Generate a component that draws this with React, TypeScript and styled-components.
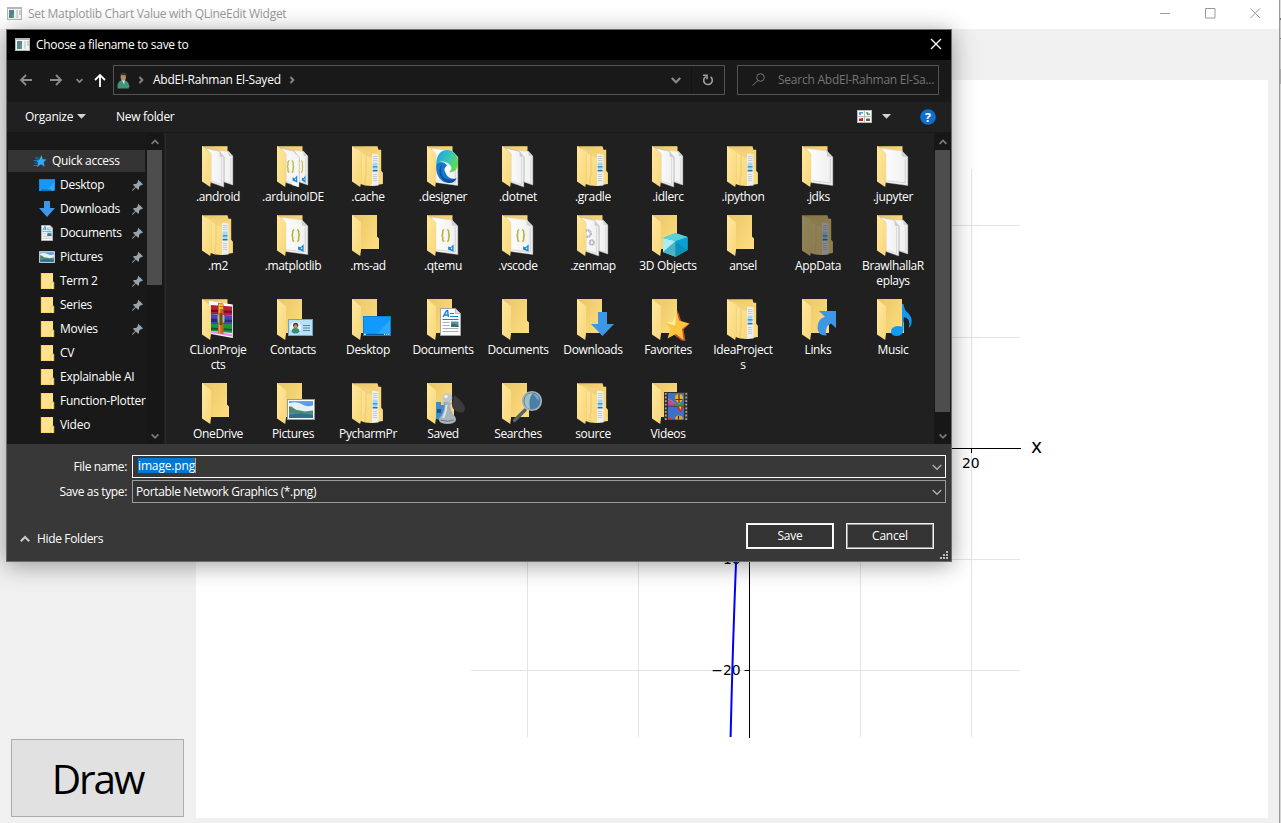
import React from "react";
import styled, { createGlobalStyle } from "styled-components";

const Global = createGlobalStyle`
  * { box-sizing: border-box; }
  body { margin: 0; overflow: hidden; font-family: "Open Sans", "Noto Sans", sans-serif; font-size: 12px; }
  svg { display: block; flex: none; }
`;

/* ---------- main window ---------- */
const Screen = styled.div`
  position: relative; width: 1281px; height: 823px; display: flex; background: #f0f0f0; overflow: hidden;
`;
const MainWindow = styled.div`flex: 1; display: flex; flex-direction: column;`;
const EdgeStrip = styled.div`
  width: 2px; border-left: 1px solid #9a9a9a;
  background: linear-gradient(#ddd 0 18px, #777 18px 20px, #ccc 20px 38px, #777 38px 39px, #c8c8c8 39px 69px, #aaa 69px 84px, #d4d4d4 84px);
`;
const MainTitle = styled.div`
  height: 29px; display: flex; align-items: center; background: #fff; color: #999; padding: 0 18px 3px 7px; gap: 6px;
`;
const MainName = styled.span`flex: 1; letter-spacing: -0.285px; white-space: nowrap;`;
const WindowButtons = styled.div`display: flex; gap: 34px; align-items: center;`;
const MainBody = styled.div`flex: 1; display: flex; padding: 51px 11px 5px 11px; gap: 12px;`;
const LeftColumn = styled.div`width: 173px; display: flex; flex-direction: column; justify-content: flex-end; padding-bottom: 1px;`;
const DrawButton = styled.button`
  height: 78px; padding: 0; border: 1px solid #adadad; background: #e1e1e1; color: #000;
  font: 40.5px "Open Sans", sans-serif; letter-spacing: -2.1px; line-height: 77px;
`;
const Canvas = styled.div`width: 1072px; background: #fff;`;

/* ---------- dialog ---------- */
const Dialog = styled.div`
  position: absolute; left: 6px; top: 29px; width: 946px; height: 533px; display: flex; flex-direction: column;
  border: 1px solid #6b6b6b; background: #383838; color: #fff;
  box-shadow: 0 3px 22px rgba(0, 0, 0, 0.38);
`;
const DialogTitle = styled.div`
  height: 30px; background: #000; display: flex; align-items: center; padding: 0 9px 1px 8px; gap: 6px;
`;
const Txt = styled.span<{ $ls?: number; $grow?: boolean }>`
  white-space: nowrap; letter-spacing: ${(p) => p.$ls ?? -0.3}px; ${(p) => p.$grow && "flex: 1;"}
`;
const NavBar = styled.div`
  height: 42px; background: #191919; display: flex; align-items: center; padding: 0 12px 2px 12px;
`;
const Arrows = styled.div`width: 94px; display: flex; align-items: center;`;
const AddressBox = styled.div`
  width: 612px; height: 30px; border: 1px solid #535353; display: flex; align-items: center; padding-left: 3px;
  font-weight: 500;
`;
const AddressText = styled.span`
  flex: 1; margin-left: 8px; padding-bottom: 1px; display: flex; align-items: center; gap: 7px; letter-spacing: -0.22px; white-space: nowrap;
`;
const RefreshCell = styled.div`
  width: 33px; height: 28px; margin-left: 10px; border-left: 1px solid #131313; display: grid; place-items: center;
`;
const SearchBox = styled.div`
  width: 202px; height: 30px; margin-left: 12px; border: 1px solid #535353; color: #757575;
  display: flex; align-items: center; gap: 13px; padding: 0 0 1px 14px;
`;
const ToolBar = styled.div`
  height: 31px; background: #202020; border-bottom: 1px solid #191919; display: flex; align-items: center;
  padding: 0 15px 1px 18px;
`;
const OrganizeItem = styled.div`width: 91px; display: flex; align-items: center; gap: 4px;`;
const Panes = styled.div`height: 311px; display: flex;`;
const SidePane = styled.div`width: 139px; background: #191919; overflow: hidden; padding: 17px 0 0 1px;`;
const QuickRow = styled.div`
  width: 137px; height: 22px; background: #333; display: flex; align-items: center; padding: 0 0 1px 24px; gap: 4px; margin-bottom: 1px;
`;
const SideRow = styled.div`height: 24px; display: flex; align-items: center; padding-left: 31px;`;
const SideLabel = styled.span`
  flex: 1; margin-left: 5px; white-space: nowrap; letter-spacing: -0.28px; padding-bottom: 1px;
`;
const PinSlot = styled.span`width: 14px; flex: none;`;
const ScrollBar = styled.div`
  width: 17px; background: #171717; display: flex; flex-direction: column; align-items: center; padding: 5px 1px 4px;
`;
const Thumb = styled.div<{ $h: number }>`width: 15px; height: ${(p) => p.$h}px; background: #4d4d4d; margin: 4px 0 auto;`;
const Splitter = styled.div`width: 3px; background: #202020; border-left: 1px solid #191919; border-right: 1px solid #2b2b2b;`;
const FilePane = styled.div`
  flex: 1; background: #202020; overflow: hidden; padding: 10px 0 0 14.5px;
`;
const FileGrid = styled.div`display: grid; grid-template-columns: repeat(10, 75px); row-gap: 7px;`;
const FileCell = styled.div<{ $dim?: boolean }>`
  display: flex; flex-direction: column; align-items: center;
  svg { opacity: ${(p) => (p.$dim ? 0.5 : 1)}; overflow: visible; }
`;
const FileLabel = styled.span`
  margin-top: -2px; padding-bottom: 1px; text-align: center; line-height: 15px; white-space: pre; letter-spacing: -0.36px;
`;
const Footer = styled.div`flex: 1; background: #383838; display: flex; flex-direction: column; padding: 11px 5px 0 0;`;
const FieldRow = styled.div`display: flex; align-items: center; margin-bottom: 2px;`;
const FieldLabel = styled.span`width: 120px; text-align: right; margin-right: 5px; letter-spacing: -0.36px;`;
const Field = styled.div<{ $focus?: boolean }>`
  flex: 1; height: 23px; display: flex; align-items: center; justify-content: space-between;
  background: ${(p) => (p.$focus ? "#383838" : "#333")};
  border: 1px solid ${(p) => (p.$focus ? "#fff" : "#9b9b9b")};
  padding: 0 3px 0 ${(p) => (p.$focus ? 5 : 3)}px;
`;
const Selected = styled.span`
  background: #0078d7; height: 15px; line-height: 15px; letter-spacing: -0.14px; border-right: 1px solid #ff8a28; margin-bottom: 2px;
`;
const ActionRow = styled.div`display: flex; align-items: center; padding: 15px 12px 0 13px; margin-top: 3px;`;
const HideFolders = styled.div`flex: 1; display: flex; align-items: center; gap: 7px; padding-top: 5px;`;
const ActionButton = styled.button<{ $primary?: boolean }>`
  width: 88px; height: 26px; margin-left: 12px; padding: 0 0 1px; background: #333; color: #fff; font: inherit; letter-spacing: -0.2px;
  border: 1px solid #f2f2f2; box-shadow: inset 0 0 0 1px ${(p) => (p.$primary ? "#fff" : "#9b9b9b")};
`;
const Grip = styled.div`display: flex; justify-content: flex-end; margin: 2px -2px 0 0;`;

/* ---------- small glyphs ---------- */
const AppIcon = () => (
  <svg width="15" height="13" viewBox="0 0 15 13">
    <rect width="15" height="13" fill="#b7b7b7" /><rect x="1" y="2" width="13" height="10" fill="#f4f4f4" />
    <rect x="2" y="3" width="5" height="8" fill="#4e8a86" /><path d="M2 3h2v6h-2z" fill="#5b7ea9" /><rect x="5" y="7" width="2" height="4" fill="#58a06a" />
    <rect x="9" y="3" width="2" height="8" fill="#d9d9d9" /><rect x="12" y="3" width="2" height="5" fill="#bcd3e2" />
  </svg>
);
const Chev = ({ dir = "down", color = "#8a8a8a", w = 8, sw = 1.8 }: { dir?: string; color?: string; w?: number; sw?: number }) => (
  <svg width={w} height={w} viewBox="0 0 8 8" fill="none" stroke={color} strokeWidth={sw}>
    <path d={dir === "down" ? "M.6 2.4 4 5.8 7.4 2.4" : dir === "up" ? "M.6 5.8 4 2.4 7.4 5.8" : "M2.4 1 5.4 4 2.4 7"} />
  </svg>
);
const NavArrow = ({ d, color }: { d: string; color: string }) => (
  <svg width="14" height="14" viewBox="0 0 14 14" fill="none" stroke={color} strokeWidth="1.8"><path d={d} /></svg>
);
const Gap = styled.span<{ $w: number }>`width: ${(p) => p.$w}px; flex: none;`;
const Caret = () => <svg width="9" height="5"><path d="M0 0h9L4.5 4.7z" fill="#d4d4d4" /></svg>;
const Pin = () => (
  <svg width="11" height="11" viewBox="0 0 11 11" fill="#98a4ad">
    <path d="M6.5 0 11 4.2 9.8 5.2 9 4.9 7 7 7.1 8.9 6 9.8 3.8 7.6 1 10.4 0 10.9 .4 9.8 3.1 6.9 1 4.8 2 3.9 4.1 4 6 2 5.6 1z" />
  </svg>
);
const UserIcon = () => (
  <svg width="13" height="17" viewBox="0 0 13 17">
    <path d="M.5 16.500V12.500q1-3.500 4-4.500l3.500.2q3.800 1.600 4.500 6.300l-1 2z" fill="#3f9576" /><path d="M4.500 7.500l3.500 0-.8 5z" fill="#e8e3d8" />
    <ellipse cx="6.300" cy="4.900" rx="2.700" ry="3.600" fill="#b98c68" /><path d="M2.800 5Q2.400 1 6 .5q4-.3 3.600 3.400L9 5 8.500 3.200 4.600 3z" fill="#38332f" />
  </svg>
);

const PictureArt = ({ x, y, w, h }: { x: number; y: number; w: number; h: number }) => (
  <svg x={x} y={y} width={w} height={h} viewBox="0 0 28 20" preserveAspectRatio="none">
    <rect width="28" height="20" fill="#9a9a9a" /><rect x="1" y="1" width="26" height="18" fill="#fff" />
    <rect x="2" y="2" width="24" height="16" fill="#5b9ddd" /><path d="M2 4q8-2 13 1t11 1v7H2z" fill="#e3f1fa" />
    <path d="M2 7q3 0 5 2t6 2l5 1 8-1v3H2z" fill="#4f8568" /><path d="M2 13h24v5H2z" fill="#4b93a4" /><path d="M2 15q12-3 24 0v3H2z" fill="#2f6f8c" />
  </svg>
);
const MonitorArt = ({ x, y, w, h }: { x: number; y: number; w: number; h: number }) => (
  <svg x={x} y={y} width={w} height={h} viewBox="0 0 28 20" preserveAspectRatio="none">
    <rect width="28" height="20" fill="#0a7fd6" /><rect x="1" y="1" width="26" height="17" fill="#1199fb" />
    <path d="M14 18 27 4v14z" fill="#2ba8ff" /><path d="M1 18.4h26" stroke="#06599b" /><path d="M1 18.3h2M21 18.3h1.2M23.2 18.3h1.2M25.2 18.3h1.2" stroke="#fff" />
  </svg>
);
const PageArt = ({ x, y, w, h }: { x: number; y: number; w: number; h: number }) => (
  <svg x={x} y={y} width={w} height={h} viewBox="0 0 21 28" preserveAspectRatio="none">
    <path d="M.5.5h15l5 5v22H.5z" fill="#fbfbfb" stroke="#a5a5a5" /><path d="M15.5.5v5h5z" fill="#ddd" stroke="#999" strokeWidth=".6" />
    <path d="M3 9 6.6 2.6h1L8.4 9M4.600 7h3.6" stroke="#1583cc" strokeWidth="1.4" fill="none" />
    <path d="M10 5.5h4M10 8.5h8M2.5 11.5h16" stroke="#1583cc" strokeWidth="1.1" />
    <path d="M2.5 14.5h7M2.5 17.5h7M2.5 20.5h16M2.5 23.5h16" stroke="#a8b0b6" strokeWidth="1" />
    <rect x="11" y="13.5" width="7.5" height="5.5" fill="#4f93c6" /><path d="M11 19v-2.5l3-1 4.5 2V19z" fill="#3b6e5d" />
  </svg>
);

const SideIcon = ({ kind }: { kind: string }) => (
  <svg width="16" height="16" viewBox="0 0 16 16">
    {kind === "desktop" && <MonitorArt x={0} y={2} w={16} h={12} />}
    {kind === "download" && <path d="M5 0h6v7h5l-8 9L0 7h5z" fill="#3c98e8" />}
    {kind === "doc" && <PageArt x={2} y={0} w={12} h={16} />}
    {kind === "picture" && <PictureArt x={0} y={2} w={16} h={12} />}
    {kind === "folder" && (
      <><path d="M2 0h12v16H2z" fill="#ffe28b" /><path d="M2 .4h12M2.3 0v16M2 15.6h12" stroke="#f3cf63" strokeWidth=".8" />
        <path d="M12 16V10h1V9h1.8v7z" fill="#fff0b8" stroke="#eec54e" strokeWidth=".8" /></>
    )}
    {kind === "star" && (
      <><path d="M9.500 2 10.800 6.300 14.500 6.600 11.600 9.200 12.800 13.800 9 11.300 5 14 6.200 9.500 3.500 7l4-.5z" fill="#35a9f7" />
        <path d="M3 5h4.500M1.500 7.500h5M2.500 10h4M1.500 12.500h4.500" stroke="#1c81c8" strokeWidth=".9" /></>
    )}
  </svg>
);

/* ---------- large folder icons ---------- */
const HiddenDefs = styled.svg`position: absolute;`;
const Defs = () => (
  <HiddenDefs width="0" height="0">
    <defs>
      <linearGradient id="flap" x1="0" x2="1" y2="1"><stop stopColor="#ffe8a0" /><stop offset="1" stopColor="#f9d779" /></linearGradient>
      <linearGradient id="back" x1="0" x2="1" y2=".6"><stop stopColor="#e9c566" /><stop offset="1" stopColor="#fbdb7d" /></linearGradient>
      <linearGradient id="sheet" x1="0" x2="1"><stop stopColor="#fff" /><stop offset="1" stopColor="#efefef" /></linearGradient>
      <linearGradient id="edgeTop" x1="0" x2="1" y2=".5"><stop stopColor="#1e9bd8" /><stop offset=".6" stopColor="#36c6c0" /><stop offset="1" stopColor="#62d84f" /></linearGradient>
    </defs>
  </HiddenDefs>
);
const Flap = () => <path d="M8 3 17 10.3V38L16.2 44 8 38.6z" fill="url(#flap)" />;
const SheetBack = () => (
  <>
    <path d="M19 7.5 34.5 8.3 38.8 13V42L30 39z" fill="url(#sheet)" stroke="#cfcfcf" strokeWidth=".4" />
    <path d="M34.3 8.4l.4 4.4 4 1z" fill="#cfcfcf" /><path d="M30.5 14v24.5l6.3 2V15" fill="none" stroke="#c5c5c5" strokeWidth=".5" />
  </>
);
const SheetFront = () => (
  <>
    <path d="M11 5 25.5 8.3 29.8 13.8V44L17 39.5V10.5z" fill="url(#sheet)" stroke="#a8a8a8" strokeWidth=".5" />
    <path d="M25.3 8.4l.5 5 4 1.2z" fill="#c9c9c9" /><path d="M17.5 38 27.5 41.5V15" fill="none" stroke="#c5c5c5" strokeWidth=".5" />
  </>
);
const SheetWide = () => (
  <>
    <path d="M12 5.3 33 8 38.8 14V42.5L17 39.5V11z" fill="url(#sheet)" stroke="#cfcfcf" strokeWidth=".4" />
    <path d="M32.5 8l.5 5.4 5.8 1.2z" fill="#cfcfcf" /><path d="M17.5 37.7 36.3 40V15.5" fill="none" stroke="#bdbdbd" strokeWidth=".6" />
  </>
);
const CodeMark = ({ x, s = 1 }: { x: number; s?: number }) => (
  <g transform={`translate(${x} 0) scale(${s} 1)`} fill="none">
    <path d="M3 17.7q-1.600 0-1.600 1.800v2.500q0 1.300-1.200 1.500 1.200.2 1.200 1.500v2.500q0 1.800 1.600 1.800M5.800 17.7q1.600 0 1.600 1.800v2.500q0 1.300 1.200 1.500-1.200.2-1.200 1.500v2.500q0 1.800-1.600 1.800" stroke="#b4b52e" strokeWidth="1.500" />
    <path d="M12.300 32.300V39.800L9.600 38.600 6.800 37.700V34.600L9.400 35.200z" fill="#1c86d6" /><path d="M9.300 36.300l1.600-1v2.200z" fill="#fff" />
  </g>
);
const Nested = () => (
  <>
    <path d="M8 3.200h25.500l1 3.500h2.700v21l1.700 2V41L26 43z" fill="url(#back)" />
    <path d="M12 5 27 8.500v34L17 38z" fill="#f2d27a" />
    <path d="M28 10.500 34.500 11.500V42.500L27.500 43z" fill="#eceff2" />
    <path d="M29 13.500h4.500M29 15.500h4.500M29 17.500h4.500M29 31.500h4M29 33.500h4M29 35.500h4M29 37.500h4" stroke="#b9c2ca" strokeWidth=".8" />
    <path d="M28.700 19.500h4.800v9H28.700z" fill="#a9d6ef" /><path d="M28.700 23.800h4.800" stroke="#3d9bd6" strokeWidth="1.500" /><path d="M28.700 27.700h4.800" stroke="#376f8c" strokeWidth="1.400" />
    <path d="M12 5.500 22 13 28 15V43L21 42.500 14 40z" fill="url(#flap)" /><path d="M22 13v20l-1 1v8" stroke="#dfb858" strokeWidth=".6" fill="none" />
    <path d="M17 10.500v28l-1 4" stroke="#e1bc5d" strokeWidth=".7" fill="none" />
  </>
);

const FolderIcon = ({ kind }: { kind: string }) => {
  const open = ["docs2", "doc1", "code2", "code1", "edge", "gears", "rar"].includes(kind);
  return (
    <svg width="48" height="48" viewBox="0 0 48 48">
      {kind === "nested" ? <Nested /> : open ? <path d="M8 3.200H33.500V38H8z" fill="url(#back)" /> : (
        <path d="M8 3H33V24.500L35 26.500V37H8z" fill="url(#back)" />
      )}
      {(kind === "docs2" || kind === "code2") && <><SheetBack /><SheetFront /></>}
      {kind === "gears" && (
        <><SheetBack /><SheetFront />
          <circle cx="18.500" cy="21.500" r="3.300" fill="none" stroke="#aebdc6" strokeWidth="2.400" strokeDasharray="1.700 .5" />
          <circle cx="22.800" cy="30.500" r="2.200" fill="none" stroke="#a3b2bc" strokeWidth="2" strokeDasharray="1.400 .4" /></>
      )}
      {(kind === "doc1" || kind === "code1" || kind === "edge") && <SheetWide />}
      {kind === "code2" && <><CodeMark x={28.500} s={0.65} /><path d="M23 8 29.800 14V44L23 42z" fill="#f6f6f6" /><CodeMark x={17.800} s={0.85} /></>}
      {kind === "code1" && <CodeMark x={22.300} />}
      {kind === "edge" && (
        <>
          <path d="M17.200 22C17 12 22 7 28 7c7 0 11 6 11 13 0 7-5 10-9 9 3-2 3-5 1-7-4-4-11-5-13.800 0z" fill="url(#edgeTop)" />
          <path d="M17.200 22C16 34 24 42 33 39.500q3-1 4.500-4Q30 37 27 31q-2-5 1.500-8.500C24 18 18.500 18 17.200 22z" fill="#1678c8" />
          <path d="M25 20.500Q20 23 22.500 31t15 4.500Q35 40 30 40C20 38 17 24 25 20.500z" fill="#114e9e" />
          <path d="M28.500 21.500q4 1.500 2.500 5-1.600 3 0 4Q25 31 25.500 25.500z" fill="#fff" />
        </>
      )}
      {kind === "rar" && (
        <>
          <path d="M15 5 38.800 8.500V42L17 38z" fill="#fff" />
          <path d="M17 9 38 10.500v9L17 18z" fill="#b91e3d" /><path d="M17 13.500 38 15v2L17 16z" fill="#6f1228" />
          <path d="M17 18 38 19.500V28L17 28z" fill="#3f49b5" /><path d="M17 22.500 38 24v2L17 26z" fill="#232a78" />
          <path d="M17 28H38v9L17 35z" fill="#1f9345" /><path d="M17 31.500 38 33v1.500L17 33.500z" fill="#0e5526" />
          <path d="M17 35 38 38v2.500L17 37z" fill="#ed8be7" />
          <path d="M24 7l5.500.5V38l-5.500-1z" fill="#c6661e" /><path d="M25.500 8v29" stroke="#e7a13d" strokeWidth="1.500" />
          <rect x="23.500" y="19" width="7" height="7.500" rx="1" fill="#b9b295" /><rect x="25.500" y="17" width="3" height="12" fill="#6c4a20" /><path d="M25 9h4M25 12h4" stroke="#f8d33a" strokeWidth="1.500" />
        </>
      )}
      <Flap />
      {kind === "cube" && (
        <><path d="M31.500 21 43.500 25v13l-12 6.700L19 40V26z" fill="#25b9d0" /><path d="M19 26l12.500 3v15.700L19 40z" fill="#a9ecf3" />
          <path d="M31.500 29l12-4v13l-12 6.700z" fill="#0c9fd6" /><path d="M31.500 29l12 9-12 6.700L19 40z" fill="#0a8ca6" opacity=".6" /><path d="M19 26l12.500-5 12 4-12 4z" fill="#57d2dd" /></>
      )}
      {kind === "contact" && (
        <><rect x="19.500" y="23.500" width="24" height="16" fill="#b9e0f5" stroke="#6aa6c6" /><circle cx="26.500" cy="31.500" r="5.700" fill="#edf6fb" />
          <path d="M22.500 36q0-4 4-4t4 4q-4 3-8 0z" fill="#3b8c6f" /><circle cx="26.700" cy="29.300" r="2.600" fill="#4e3a2e" /><circle cx="26.700" cy="30.300" r="1.700" fill="#c3926d" />
          <path d="M34 29.500h7M34 32h7M34 34.500h7" stroke="#3d7ca3" strokeWidth=".9" /></>
      )}
      {kind === "desktop" && <MonitorArt x={19} y={20} w={28} h={20} />}
      {kind === "page" && <PageArt x={21} y={12} w={21} h={28} />}
      {kind === "download" && <path d="M29 16h9v12h7L33.500 40 22 28h7z" fill="#3e97e6" />}
      {kind === "star" && (
        <><path d="M33.500 14l4 12 8.500 1.500-6.500 6 2 11.500-4-.5-8-6z" fill="#c9512a" /><path d="M32.500 14.500l2.500 10 10 3-7 5.500 1.500 11-7.700-6L23.500 42.500l3-9.500-5.500-6.500 8-1z" fill="#fbc540" />
          <path d="M32.500 14.500l-1.500 15-9.500-2.700 7.500-1.300z" fill="#fff0a0" /></>
      )}
      {kind === "link" && <path d="M25 15H42V32L37 27.500Q30 31 32.500 39.500 24 40 23.500 32T31 20.500L29 19z" fill="#3e97e6" />}
      {kind === "music" && <path d="M33 8h1.500Q35 14 40 18q5 6 1 13l-1.300.6Q42.500 22.500 34.800 21L34.500 34Q34 39.500 28 40 22 40 22 35.500q0-5 7-5.500l4 .6z" fill="#0f9bf5" />}
      {kind === "picture" && <PictureArt x={18} y={19} w={28} h={21} />}
      {kind === "games" && (
        <><path d="M17 22h5v3h3v-3h5v17q-8 2-13 0z" fill="#3d8ccc" /><path d="M18 29h4v4h-4z" fill="#1e5686" />
          <path d="M35 15q11 8 11 14-1 5-6 3-6-1-7-6z" fill="#3b3b3e" />
          <circle cx="28.500" cy="18" r="4.800" fill="#bcc6cc" /><path d="M24 22.500h9v2h-1.700q0 7 5 12.500 3 6.500-8 7Q19 43.700 20 38.500 25.500 33 25.700 24.500H24z" fill="#a7b4bc" />
          <path d="M27.500 25q-.5 8-3.500 13" stroke="#dfe5e8" strokeWidth="1.800" fill="none" />
          <path d="M21.500 40q7 2.500 13.500 0" stroke="#6b7880" fill="none" /><circle cx="27" cy="16.500" r="1.800" fill="#eef2f4" /></>
      )}
      {kind === "search" && (
        <><path d="M31 30 20.500 40.500" stroke="#5a6167" strokeWidth="3.400" strokeLinecap="round" /><circle cx="38" cy="21" r="9.300" fill="#4c7fa4" stroke="#a9b3ba" strokeWidth="1.600" />
          <path d="M31 24a8 8 0 0 1 8-11q-5 5-3 16-4-1-5-5z" fill="#b4d6cd" opacity=".8" /><path d="M39 14q6 0 6 7-3-4-6-7z" fill="#7fb1d4" /></>
      )}
      {kind === "film" && (
        <><rect x="20" y="12" width="24" height="28" fill="#303030" /><path d="M21.800 13v27M42.200 13v27" stroke="#a5a5a5" strokeWidth="1.800" strokeDasharray="1.800 1.800" />
          <rect x="24" y="13" width="16" height="12.500" fill="#3f6fc9" /><rect x="24" y="26.500" width="16" height="13" fill="#3f6fc9" />
          <path d="M24 25.500v-5l6 2 5 3z" fill="#d6409a" /><path d="M24 19l5 2.500 2 2" stroke="#e87c30" fill="none" /><path d="M30 23.500h10v2H30z" fill="#2f9a41" />
          <path d="M31 18a4 4 0 0 1 8 0q0 2.500-4 6-4-3.500-4-6z" fill="#e8b31b" /><path d="M35 14v9M31.500 19.500h7" stroke="#6f2020" strokeWidth="1.200" />
          <path d="M32.500 26.500h7.500l-3.500 6z" fill="#cf2b2b" /><path d="M35 26.500h2.500l-1.200 3.500z" fill="#f1ca2a" /><path d="M31 39.500q0-4 4-4t4 4z" fill="#e3a51d" /><path d="M34.500 36v3.500" stroke="#222" /><path d="M24 39.500v-3l6 3z" fill="#d33" /></>
      )}
    </svg>
  );
};

const files: [string, string][] = [
  [".android", "docs2"], [".arduinoIDE", "code2"], [".cache", "nested"], [".designer", "edge"], [".dotnet", "docs2"],
  [".gradle", "nested"], [".idlerc", "docs2"], [".ipython", "nested"], [".jdks", "doc1"], [".jupyter", "doc1"],
  [".m2", "nested"], [".matplotlib", "code1"], [".ms-ad", "empty"], [".qtemu", "code1"], [".vscode", "code1"],
  [".zenmap", "gears"], ["3D Objects", "cube"], ["ansel", "empty"], ["AppData", "nested"], ["BrawlhallaR\neplays", "docs2"],
  ["CLionProje\ncts", "rar"], ["Contacts", "contact"], ["Desktop", "desktop"], ["Documents", "page"], ["Documents", "empty"],
  ["Downloads", "download"], ["Favorites", "star"], ["IdeaProject\ns", "nested"], ["Links", "link"], ["Music", "music"],
  ["OneDrive", "empty"], ["Pictures", "picture"], ["PycharmPr", "nested"], ["Saved", "games"], ["Searches", "search"],
  ["source", "nested"], ["Videos", "film"],
];
const places: [string, string, boolean][] = [
  ["Desktop", "desktop", true], ["Downloads", "download", true], ["Documents", "doc", true], ["Pictures", "picture", true],
  ["Term 2", "folder", true], ["Series", "folder", true], ["Movies", "folder", true], ["CV", "folder", false],
  ["Explainable AI", "folder", false], ["Function-Plotter", "folder", false], ["Video", "folder", false],
];

const Plot = () => (
  <svg width="1072" height="738" viewBox="196 80 1072 738" fontFamily="DejaVu Sans, sans-serif">
    <g fill="#e4e4e4">
      {[527, 638, 860, 971].map((x) => <rect key={x} x={x} y="169" width="1" height="568" />)}
      {[225, 337, 559, 670].map((y) => <rect key={y} x="471" y={y} width="549" height="1" />)}
    </g>
    <path d="M749.500 169V738M471 448.500H1021M971.500 448v5M744.500 670.500h5M744.500 559.500h5" stroke="#000" />
    <g fontSize="13.900"><text x="962" y="468">20</text><text x="711.300" y="675">−20</text><text x="711.300" y="564">−10</text></g>
    <text x="1031" y="453" fontSize="18.800">x</text>
    <path d="M736.300 555Q732.800 642 730.600 737" fill="none" stroke="#0000ff" strokeWidth="2" />
  </svg>
);

const Scroller = ({ h }: { h: number }) => (
  <ScrollBar><Chev dir="up" color="#7b7b7b" /><Thumb $h={h} /><Chev color="#7b7b7b" /></ScrollBar>
);

export default function App() {
  return (
    <Screen>
      <Global />
      <Defs />
      <MainWindow>
        <MainTitle>
          <AppIcon />
          <MainName>Set Matplotlib Chart Value with QLineEdit Widget</MainName>
          <WindowButtons>
            <svg width="11" height="11"><path d="M0 5.500h10" stroke="#999" /></svg>
            <svg width="11" height="11"><path d="M.5.500h9.500v9.500H.5z" stroke="#999" fill="none" /></svg>
            <svg width="11" height="11"><path d="M.5.500l9.500 9.500M10 .5l-9.500 9.500" stroke="#999" /></svg>
          </WindowButtons>
        </MainTitle>
        <MainBody>
          <LeftColumn><DrawButton>Draw</DrawButton></LeftColumn>
          <Canvas><Plot /></Canvas>
        </MainBody>
      </MainWindow>
      <EdgeStrip />

      <Dialog>
        <DialogTitle>
          <AppIcon />
          <Txt $grow>Choose a filename to save to</Txt>
          <svg width="12" height="13"><path d="M1 1l10 10M11 1 1 11" stroke="#fff" strokeWidth="1.300" /></svg>
        </DialogTitle>
        <NavBar>
          <Arrows>
            <NavArrow color="#8c8c8c" d="M13 7H2M7 2 2 7l5 5" /><Gap $w={16} />
            <NavArrow color="#8c8c8c" d="M1 7h11M7 2l5 5-5 5" /><Gap $w={13} />
            <Chev color="#8c8c8c" w={7} /><Gap $w={10} />
            <NavArrow color="#fff" d="M7 14V2M2 7l5-5 5 5" />
          </Arrows>
          <AddressBox>
            <UserIcon /><Gap $w={7} /><Chev dir="right" />
            <AddressText>AbdEl-Rahman El-Sayed<Chev dir="right" /></AddressText>
            <Chev w={10} />
            <RefreshCell>
              <svg width="12" height="12" viewBox="0 0 12 12" fill="none" stroke="#a0a0a0" strokeWidth="1.600"><path d="M3.700 2.600A4.300 4.300 0 1 0 8.600 2.800" /><path d="M1 1.300h4v4" /></svg>
            </RefreshCell>
          </AddressBox>
          <SearchBox>
            <svg width="13" height="13" viewBox="0 0 13 13" fill="none" stroke="#757575"><circle cx="8.500" cy="4.500" r="3.800" /><path d="M6 7.500.5 12.500" /></svg>
            <Txt $ls={-0.24}>Search AbdEl-Rahman El-Sa...</Txt>
          </SearchBox>
        </NavBar>
        <ToolBar>
          <OrganizeItem><Txt $ls={-0.25}>Organize</Txt><Caret /></OrganizeItem>
          <Txt $grow>New folder</Txt>
          <svg width="15" height="13"><rect width="15" height="13" fill="#bbb" /><path d="M1 1h6v5H1zM8 1h6v5H8zM1 7h6v5H1zM8 7h6v5H8z" fill="#fff" />
            <path d="M2 2h4v1.500H4V5H2z" fill="#5a9fdc" /><path d="M9 2h2v1.500h2V5h-3z" fill="#4da05a" /><path d="M2 8.500h2.500v-.5H6v3H2z" fill="#c3241c" /><path d="M9 8.500h4v2.500H9z" fill="#536d42" /></svg>
          <Gap $w={10} /><Caret /><Gap $w={29} />
          <svg width="16" height="16"><circle cx="8" cy="8" r="7.800" fill="#0c6fd1" /><text x="8" y="12.500" textAnchor="middle" fill="#fff" fontSize="12.500" fontWeight="700" fontFamily="Open Sans">?</text></svg>
        </ToolBar>
        <Panes>
          <SidePane>
            <QuickRow><SideIcon kind="star" /><Txt>Quick access</Txt></QuickRow>
            {places.map(([name, kind, pinned]) => (
              <SideRow key={name}>
                <SideIcon kind={kind} /><SideLabel>{name}</SideLabel>{pinned && <PinSlot><Pin /></PinSlot>}
              </SideRow>
            ))}
          </SidePane>
          <Scroller h={135} />
          <Splitter />
          <FilePane>
            <FileGrid>
              {files.map(([name, kind], i) => (
                <FileCell key={i} $dim={name === "AppData"}><FolderIcon kind={kind} /><FileLabel>{name}</FileLabel></FileCell>
              ))}
            </FileGrid>
          </FilePane>
          <Scroller h={262} />
        </Panes>
        <Footer>
          <FieldRow><FieldLabel>File name:</FieldLabel><Field $focus><Selected>image.png</Selected><Chev w={10} sw={1} color="#b4b4b4" /></Field></FieldRow>
          <FieldRow><FieldLabel>Save as type:</FieldLabel><Field><Txt $ls={-0.36}>Portable Network Graphics (*.png)</Txt><Chev w={10} sw={1} color="#b4b4b4" /></Field></FieldRow>
          <ActionRow>
            <HideFolders><Chev dir="up" color="#c8c8c8" w={10} /><Txt $ls={-0.35}>Hide Folders</Txt></HideFolders>
            <ActionButton $primary>Save</ActionButton><ActionButton>Cancel</ActionButton>
          </ActionRow>
          <Grip><svg width="8" height="8" fill="#bbb"><path d="M6 0h2v2H6zM3 3h2v2H3zM6 3h2v2H6zM0 6h2v2H0zM3 6h2v2H3zM6 6h2v2H6z" /></svg></Grip>
        </Footer>
      </Dialog>
    </Screen>
  );
}
